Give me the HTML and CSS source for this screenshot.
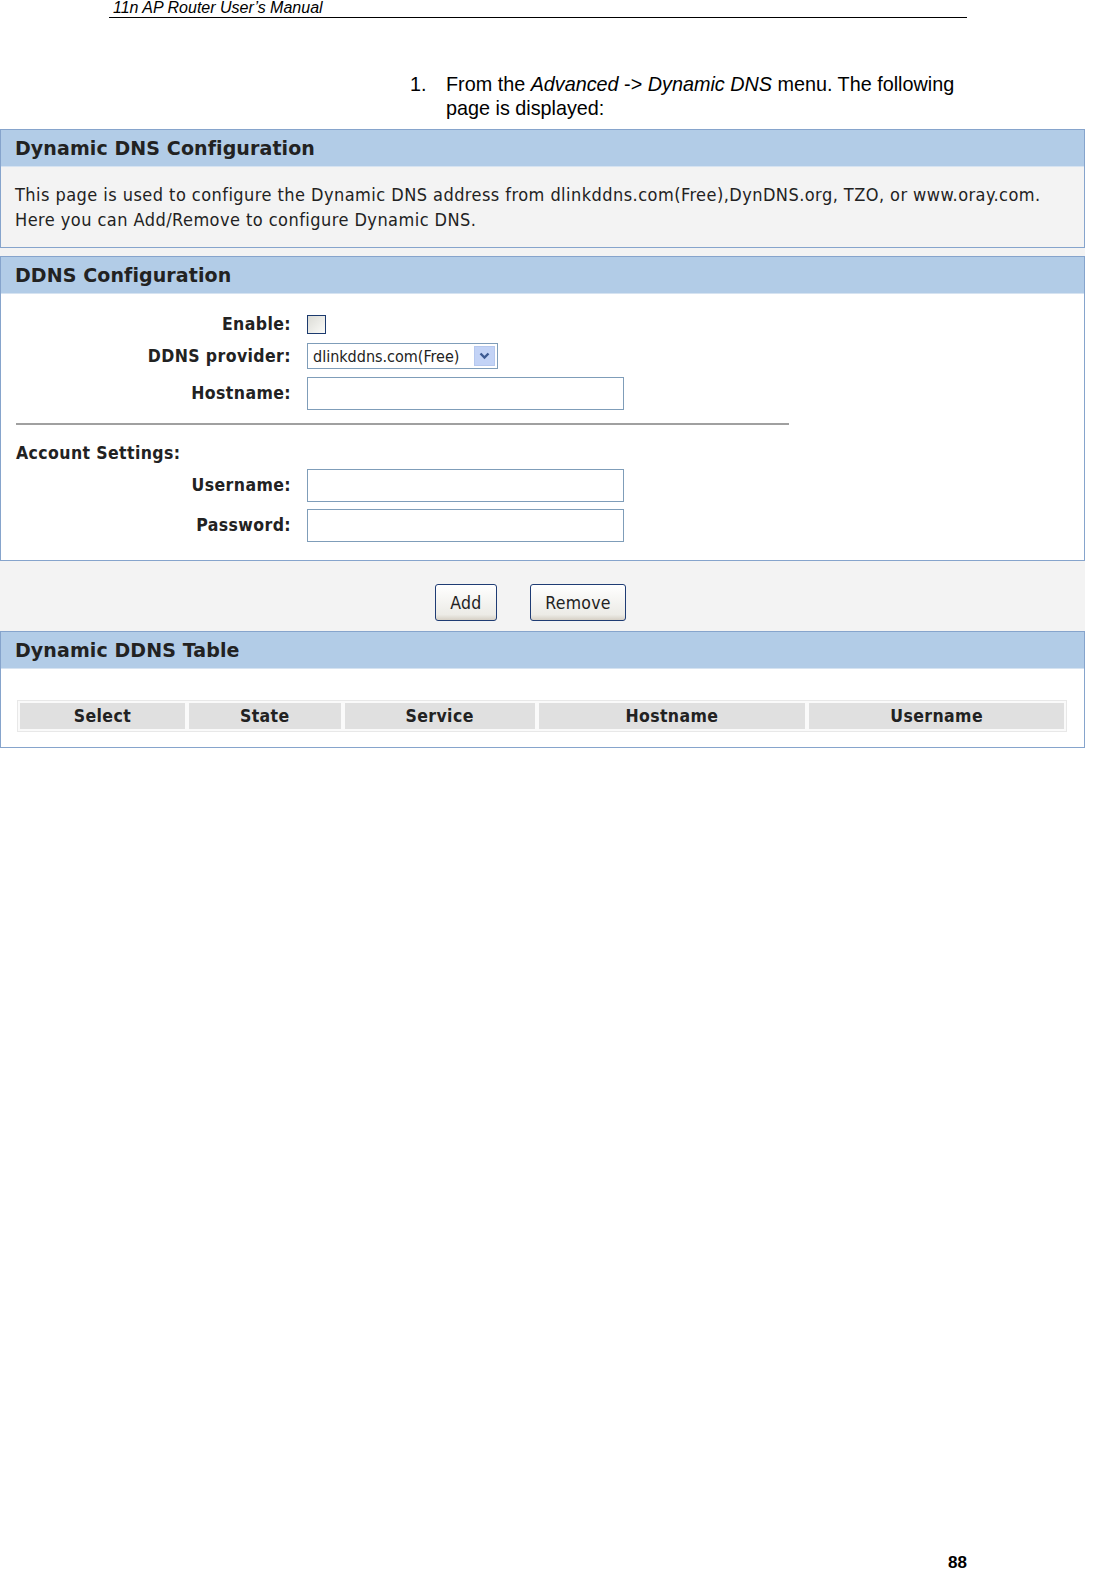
FILE: index.html
```html
<!DOCTYPE html>
<html>
<head>
<meta charset="utf-8">
<link rel="stylesheet" href="styles.css">
</head>
<body>
<div class="doc-header">
  <div class="doc-title">11n AP Router User’s Manual</div>
</div>
<div class="step">
  <span class="step-num">1.</span>
  <span class="step-text">From the <i>Advanced</i> -&gt; <i>Dynamic DNS</i> menu. The following page is displayed:</span>
</div>
<div class="shot">
  <div class="panel">
    <div class="panel-head">Dynamic DNS Configuration</div>
    <div class="panel-body grey desc">This page is used to configure the Dynamic DNS address from dlinkddns.com(Free),DynDNS.org, TZO, or www.oray.com.<br>Here you can Add/Remove to configure Dynamic DNS.</div>
  </div>
  <div class="panel">
    <div class="panel-head">DDNS Configuration</div>
    <div class="panel-body form">
      <div class="frow r-enable"><div class="lbl">Enable:</div><div class="chk"></div></div>
      <div class="frow r-prov"><div class="lbl">DDNS provider:</div>
        <div class="select"><span class="sel-text">dlinkddns.com(Free)</span><span class="sel-btn"><svg width="11" height="8" viewBox="0 0 11 8"><path d="M1.5 1.5 L5.5 5.5 L9.5 1.5" fill="none" stroke="#3d5a92" stroke-width="2.4"/></svg></span></div>
      </div>
      <div class="frow r-host"><div class="lbl">Hostname:</div><div class="txt"></div></div>
      <div class="hr"></div>
      <div class="acct">Account Settings:</div>
      <div class="frow r-user"><div class="lbl">Username:</div><div class="txt"></div></div>
      <div class="frow r-pass"><div class="lbl">Password:</div><div class="txt"></div></div>
    </div>
  </div>
  <div class="buttons">
    <div class="btn btn-add">Add</div>
    <div class="btn btn-rem">Remove</div>
  </div>
  <div class="panel">
    <div class="panel-head">Dynamic DDNS Table</div>
    <div class="panel-body table-body">
      <div class="tbl">
        <div class="th c1">Select</div>
        <div class="th c2">State</div>
        <div class="th c3">Service</div>
        <div class="th c4">Hostname</div>
        <div class="th c5">Username</div>
      </div>
    </div>
  </div>
</div>
<div class="page-num">88</div>
</body>
</html>
```
FILE: styles.css
```css
html, body { margin: 0; padding: 0; background: #fff; }
body { width: 1097px; height: 1586px; position: relative; font-family: "Liberation Sans", Arial, sans-serif; color: #000; }

.doc-header { margin-left: 109px; width: 858px; border-bottom: 1px solid #000; height: 17px; }
.doc-title { font-style: italic; font-size: 16px; line-height: 15px; padding-left: 4px; }

.step { display: flex; margin-top: 54px; margin-left: 410px; font-size: 19.8px; line-height: 24px; width: 570px; }
.step-num { width: 36px; flex: none; }
.step-text { width: 530px; }

.shot { margin-top: 9px; width: 1085px; background: #f3f3f3; font-family: "DejaVu Sans Condensed", "DejaVu Sans", sans-serif; color: #222; }
.panel { border: 1px solid #86a4cc; margin-bottom: 8px; background: #fff; }
.panel-head { background: #b2cce7; height: 36px; line-height: 37px; padding-left: 14px; font-family: "DejaVu Sans", sans-serif; font-weight: bold; font-size: 19px; letter-spacing: 0.1px; color: #222; border-bottom: 1px solid #d6e3f1; }
.panel-body { background: #fff; }
.grey { background: #f3f3f3; }
.desc { font-size: 18px; letter-spacing: 0.45px; line-height: 25px; padding: 15px 14px 15px; height: 50px; color: #222; }

.form { height: 266px; }
.frow { display: flex; align-items: center; }
.lbl { width: 290px; text-align: right; font-weight: bold; font-size: 17.5px; letter-spacing: 0.4px; padding-right: 16px; color: #222; }
.r-enable { padding-top: 19px; height: 22px; }
.chk { width: 17px; height: 17px; border: 1px solid #1c3a6e; background: linear-gradient(135deg, #dcdcd6, #fbfbf8); }
.r-prov { margin-top: 8px; height: 26px; }
.select { width: 189px; height: 24px; border: 1px solid #7f9db9; display: flex; align-items: center; justify-content: space-between; background: #fff; }
.sel-text { font-size: 16px; padding-left: 5px; color: #222; }
.sel-btn { width: 21px; height: 20px; margin-right: 2px; background: #c3d3f6; border: 1px solid #b6c8ee; display: flex; align-items: center; justify-content: center; box-sizing: border-box; }
.r-host { margin-top: 7px; height: 34px; }
.txt { width: 315px; height: 31px; border: 1px solid #7f9db9; background: #fff; }
.hr { margin: 13px 0 0 15px; width: 773px; height: 0; border-top: 2px solid #a0a0a0; }
.acct { margin: 16px 0 0 15px; font-weight: bold; font-size: 17.5px; letter-spacing: 0.4px; height: 24px; line-height: 24px; }
.r-user { margin-top: 3px; height: 34px; }
.r-pass { margin-top: 6px; height: 34px; }

.buttons { display: flex; height: 60px; align-items: flex-end; margin-top: -8px; padding-left: 435px; padding-bottom: 10px; }
.btn { border: 1px solid #1f3c74; border-radius: 3px; background: linear-gradient(#ffffff, #ecebe6 85%, #d6d0c5); font-size: 17.5px; letter-spacing: 0.3px; display: flex; align-items: center; justify-content: center; color: #222; box-sizing: border-box; height: 37px; }
.btn-add { width: 62px; }
.btn-rem { width: 96px; margin-left: 33px; }

.table-body { height: 78px; }
.tbl { position: relative; top: 31px; margin-left: 16px; width: 1050px; display: flex; gap: 4px; padding: 2px; background: #fafafa; border: 1px solid #e8e8e8; box-sizing: border-box; }
.th { background: #e0e0e0; height: 26px; line-height: 27px; text-align: center; font-weight: bold; font-size: 17.5px; letter-spacing: 0.4px; color: #222; }
.c1 { width: 165px; }
.c2 { width: 152px; }
.c3 { width: 190px; }
.c4 { width: 267px; }
.c5 { width: 255px; }

.page-num { position: absolute; left: 948px; top: 1553px; font-weight: bold; font-size: 17px; }
```
